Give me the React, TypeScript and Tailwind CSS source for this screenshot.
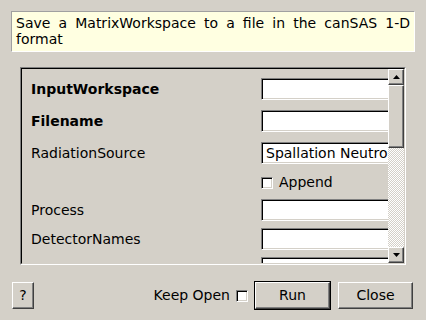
import * as React from 'react';

const raised =
  'border border-t-white border-l-white border-r-[#404040] border-b-[#404040] shadow-[inset_-1px_-1px_0_0_#808080] bg-[#d4d0c8]';
const sunken =
  'border border-t-[#808080] border-l-[#808080] border-r-white border-b-white shadow-[inset_1px_1px_0_0_#000,inset_-1px_-1px_0_0_#d4d0c8]';

const Field: React.FC<{ label: string; bold?: boolean; value?: string; mt: string }> = ({ label, bold, value, mt }) => (
  <div className={`flex h-[22px] items-center ${mt}`}>
    <div className={`w-[239px] shrink-0 pl-[9px] ${bold ? 'font-bold' : ''}`}>{label}</div>
    <div className={`h-[22px] w-[160px] shrink-0 bg-white pl-[4px] leading-[20px] whitespace-nowrap ${sunken}`}>
      {value}
    </div>
  </div>
);

const Arrow: React.FC<{ down?: boolean }> = ({ down }) => (
  <svg width="7" height="4" viewBox="0 0 7 4">
    <polygon points={down ? '0,0 7,0 3.5,4' : '0,4 7,4 3.5,0'} fill="#000" />
  </svg>
);

const App: React.FC = () => {
  return (
    <div
      className="flex h-[320px] w-[426px] flex-col overflow-hidden bg-[#d4d0c8] text-[14px] text-black"
      style={{ fontFamily: '"DejaVu Sans", sans-serif' }}
    >
      <div className="mx-[11px] mt-[11px] h-[41px] border border-t-[#a0a0a0] border-l-[#a0a0a0] border-r-white border-b-white bg-[#ffffe1] px-[4px] pt-[3px] leading-[16px]">
        <p className="text-justify">Save a MatrixWorkspace to a file in the canSAS 1-D format</p>
      </div>

      <div className="ml-[20px] mt-[15px] h-[198px] w-[386px] border border-t-[#808080] border-l-[#808080] border-r-white border-b-white">
        <div className="flex h-full w-full border border-t-black border-l-black border-r-[#d4d0c8] border-b-[#d4d0c8]">
          <div className="flex min-w-0 flex-1 flex-col overflow-hidden">
            <Field label="InputWorkspace" bold mt="mt-[9px]" />
            <Field label="Filename" bold mt="mt-[10px]" />
            <Field label="RadiationSource" value="Spallation Neutron Source" mt="mt-[10px]" />
            <div className="mt-[8px] flex h-[22px] items-center">
              <div className="w-[239px] shrink-0" />
              <div className={`h-[12px] w-[12px] bg-white ${sunken}`} />
              <span className="ml-[6px]">Append</span>
            </div>
            <Field label="Process" mt="mt-[6px]" />
            <Field label="DetectorNames" mt="mt-[7px]" />
            <Field label="" mt="mt-[7px]" />
          </div>
          <div className="flex w-[16px] shrink-0 flex-col">
            <div className={`flex h-[16px] items-center justify-center ${raised}`}>
              <Arrow />
            </div>
            <div className={`h-[63px] ${raised}`} />
            <div className="flex-1 bg-[repeating-conic-gradient(#d4d0c8_0_25%,#ffffff_0_50%)] bg-[length:2px_2px]" />
            <div className={`flex h-[16px] items-center justify-center ${raised}`}>
              <Arrow down />
            </div>
          </div>
        </div>
      </div>

      <div className="mt-[16px] flex items-center px-[12px]">
        <button className={`h-[27px] w-[22px] ${raised}`}>?</button>
        <div className="ml-auto flex items-center">
          <span>Keep Open</span>
          <div className={`ml-[6px] h-[12px] w-[12px] bg-white ${sunken}`} />
        </div>
        <button className="ml-[6px] h-[29px] w-[77px] border border-black">
          <div className={`flex h-full w-full items-center justify-center ${raised}`}>Run</div>
        </button>
        <button className={`ml-[7px] mr-[1px] h-[27px] w-[75px] ${raised}`}>Close</button>
      </div>
    </div>
  );
};

export default App;
